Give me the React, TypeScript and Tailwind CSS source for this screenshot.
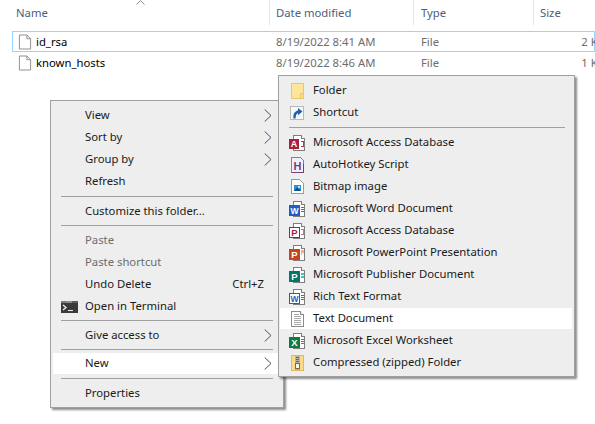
import React from "react";

const font = "font-['Noto_Sans','Open_Sans',sans-serif]";

function Doc({ stroke = "#7f7f7f" }: { stroke?: string }) {
  return (
    <g shapeRendering="crispEdges">
      <path d="M4.5 .5H12.5L15.5 3.5V15.5H4.5Z" fill="#fff" stroke={stroke} />
      <path d="M12.5 .5V3.5H15.5" fill="#e8e8e8" stroke={stroke} />
    </g>
  );
}

function SmallPage() {
  return (
    <g fill="none">
      <path d="M1.5 .5H9.5L13.5 4.5V15.5H1.5Z" fill="#fff" stroke="#8a8a8a" />
      <path d="M9.5 .5V4.5H13.5" stroke="#8a8a8a" />
    </g>
  );
}

function OfficeIcon({ color, letter, right, outline = false }: { color: string; letter: string; right: React.ReactNode; outline?: boolean }) {
  return (
    <svg width="17" height="16" viewBox="0 0 17 16" className="shrink-0">
      <Doc />
      <g shapeRendering="crispEdges">{right}</g>
      <rect x={outline ? 0.5 : 0} y={outline ? 4.5 : 4} width={outline ? 10 : 11} height={outline ? 10 : 11} fill={outline ? "#fff" : color} stroke={outline ? color : "none"} shapeRendering="crispEdges" />
      <text x="5.5" y="12.8" textAnchor="middle" fontSize={letter === "W" ? 8.5 : 9.5} fontWeight="700" fontFamily="Liberation Sans" fill={outline ? color : "#fff"}>{letter}</text>
    </svg>
  );
}

const bars = (c: string) => <path d="M12 6.5H15M12 8.5H15M12 10.5H15" stroke={c} fill="none" />;

const icons: Record<string, React.ReactNode> = {
  folder: (
    <svg width="17" height="16" viewBox="0 0 17 16" className="shrink-0" shapeRendering="crispEdges">
      <path d="M2.5 .5H14.5V15.5H2.5Z" fill="#fde59a" stroke="#eac768" />
      <path d="M11.5 10.5H14.5V15.5H11.5Z" fill="#fcdc85" stroke="#eac768" />
    </svg>
  ),
  shortcut: (
    <svg width="17" height="16" viewBox="0 0 17 16" className="shrink-0">
      <rect x="1.5" y="1.5" width="13" height="13" fill="#f8f8f8" stroke="#b8b8b8" shapeRendering="crispEdges" />
      <path d="M4.5 13.5C3.8 9 5.8 6 9 5.4V3L13.5 6.6L9 10.2V8.2C7.4 8.6 6.6 10.8 6.6 13.5Z" fill="#1e62a8" />
    </svg>
  ),
  accessA: (
    <svg width="17" height="16" viewBox="0 0 17 16" className="shrink-0">
      <Doc />
      <path d="M11.5 6.5H14.5V11.5H11.5" fill="none" stroke="#b43a5a" shapeRendering="crispEdges" />
      <rect x="0" y="4" width="10" height="10" fill="#a81f3c" shapeRendering="crispEdges" />
      <text x="5" y="12.2" textAnchor="middle" fontSize="9" fontWeight="700" fontFamily="Liberation Sans" fill="#fff">A</text>
    </svg>
  ),
  ahk: (
    <svg width="17" height="16" viewBox="0 0 17 16" className="shrink-0">
      <g shapeRendering="crispEdges">
        <path d="M2.5 .5H11.5L14.5 3.5V15.5H2.5Z" fill="#eef0fa" stroke="#6f7fc8" />
        <path d="M2.5 15.5H14.5V7" fill="none" stroke="#7a3f78" />
      </g>
      <text x="8.5" y="12.6" textAnchor="middle" fontSize="11" fontWeight="700" fontFamily="Liberation Sans" fill="#7d3b78">H</text>
    </svg>
  ),
  bitmap: (
    <svg width="17" height="16" viewBox="0 0 17 16" className="shrink-0">
      <g shapeRendering="crispEdges">
        <path d="M2.5 .5H10.5L14.5 4.5V14.5H2.5Z" fill="#fff" stroke="#9a9a9a" />
        <rect x="5" y="6" width="7" height="6" fill="#2f8fd8" />
        <rect x="9" y="7" width="2" height="2" fill="#bfe2f7" />
      </g>
      <path d="M5 12L8 8.5L12 12Z" fill="#10507f" />
    </svg>
  ),
  word: <OfficeIcon color="#1f5fbf" letter="W" right={bars("#2b7cd3")} />,
  access: <OfficeIcon color="#a81f3c" letter="P" right={<path d="M12 6.5H14.5V11.5H12" stroke="#d0708c" fill="none" />} outline />,
  ppt: (
    <OfficeIcon color="#c8431f" letter="P" right={<path d="M12 5H15V8H13V10H12Z" fill="#f4b183" />} />
  ),
  pub: <OfficeIcon color="#077568" letter="P" right={<path d="M12 6H15V8H12ZM12 9H15V11H12Z" fill="#37c6d0" />} />,
  rtf: <OfficeIcon color="#1f5fbf" letter="W" right={bars("#2b7cd3")} outline />,
  txt: (
    <svg width="17" height="16" viewBox="0 0 17 16" className="shrink-0" shapeRendering="crispEdges">
      <path d="M2.5 .5H11.5L14.5 3.5V15.5H2.5Z" fill="#fff" stroke="#8a8a8a" />
      <path d="M11.5 .5V3.5H14.5" fill="#e8e8e8" stroke="#8a8a8a" />
      <path d="M5 3.5H10M5 5.5H12M5 7.5H12M5 9.5H12M5 11.5H12M5 13.5H12" stroke="#a8a8a8" />
    </svg>
  ),
  excel: <OfficeIcon color="#107c41" letter="X" right={bars("#21a366")} />,
  zip: (
    <svg width="17" height="16" viewBox="0 0 17 16" className="shrink-0" shapeRendering="crispEdges">
      <path d="M2.5 .5H14.5V15.5H2.5Z" fill="#fcdc85" stroke="#e0bb5c" />
      <rect x="6" y="1" width="5" height="14" fill="#b5b0a2" />
      <path d="M7 2.5H10M7 4.5H10M7 6.5H10" stroke="#6f6a5a" />
      <rect x="6.5" y="8.5" width="4" height="5" fill="#f5f5f5" stroke="#6f6a5a" />
    </svg>
  ),
  terminal: (
    <svg width="17" height="12" viewBox="0 0 17 12" className="shrink-0" shapeRendering="crispEdges">
      <rect width="17" height="12" fill="#3a3a3a" />
      <rect width="5" height="2" fill="#7a7a7a" />
      <rect x="5" width="6" height="2" fill="#8e8e8e" />
      <rect x="11" width="6" height="2" fill="#5c5c5c" />
      <path d="M2 4L5 6.5L2 9" stroke="#f0f0f0" fill="none" strokeWidth="1.3" shapeRendering="auto" />
      <path d="M7 9.5H12" stroke="#f0f0f0" />
    </svg>
  ),
};

function Arrow() {
  return (
    <svg width="8" height="13" viewBox="0 0 8 13" className="shrink-0">
      <path d="M.7 .5L7 6.5L.7 12.5" fill="none" stroke="#3f5068" strokeWidth="1" />
    </svg>
  );
}

function Sep({ className }: { className: string }) {
  return (
    <div className={`flex items-center ${className}`}>
      <div className="h-px w-full bg-[#a0a0a0]" />
    </div>
  );
}

type Item = { label?: string; arrow?: boolean; icon?: string; hint?: string; disabled?: boolean; active?: boolean; sep?: string; raise?: boolean };

const mainItems: Item[] = [
  { label: "View", arrow: true },
  { label: "Sort by", arrow: true },
  { label: "Group by", arrow: true },
  { label: "Refresh" },
  { sep: "h-[8px]" },
  { label: "Customize this folder..." },
  { sep: "h-[7px]" },
  { label: "Paste", disabled: true },
  { label: "Paste shortcut", disabled: true },
  { label: "Undo Delete", hint: "Ctrl+Z" },
  { label: "Open in Terminal", icon: "terminal" },
  { sep: "h-[7px]" },
  { label: "Give access to", arrow: true },
  { sep: "h-[7px]" },
  { label: "New", arrow: true, active: true, raise: true },
  { sep: "h-[7px]" },
  { label: "Properties" },
];

const newItems: Item[] = [
  { label: "Folder", icon: "folder" },
  { label: "Shortcut", icon: "shortcut" },
  { sep: "h-[8px]" },
  { label: "Microsoft Access Database", icon: "accessA" },
  { label: "AutoHotkey Script", icon: "ahk" },
  { label: "Bitmap image", icon: "bitmap" },
  { label: "Microsoft Word Document", icon: "word" },
  { label: "Microsoft Access Database", icon: "access" },
  { label: "Microsoft PowerPoint Presentation", icon: "ppt" },
  { label: "Microsoft Publisher Document", icon: "pub" },
  { label: "Rich Text Format", icon: "rtf" },
  { label: "Text Document", icon: "txt", active: true },
  { label: "Microsoft Excel Worksheet", icon: "excel" },
  { label: "Compressed (zipped) Folder", icon: "zip" },
];

function Menu({ items, className, labelPad, sepClass }: { items: Item[]; className: string; labelPad: string; sepClass: string }) {
  return (
    <div className={`absolute flex flex-col border border-[#a0a0a0] bg-[#eeeeee] py-[3px] pr-[2px] text-[11.3px] shadow-[2px_2px_2px_rgba(0,0,0,0.45)] ${className}`}>
      {items.map((it, i) =>
        it.sep ? (
          <Sep key={i} className={`${it.sep} ${sepClass}`} />
        ) : (
          <div key={i} className={`flex h-[21px] items-center ${it.raise ? "mb-[1px]" : "mt-[1px]"} ${it.active ? "bg-white" : ""} ${it.disabled ? "text-[#6d6d6d]" : "text-[#1a1a1a]"}`}>
            <div className={`flex shrink-0 items-center ${labelPad}`}>{it.icon ? icons[it.icon] : null}</div>
            <span className="flex-1 whitespace-nowrap">{it.label}</span>
            {it.hint && <span className="mr-[17px] whitespace-nowrap">{it.hint}</span>}
            {it.arrow && <div className="mr-[9px] flex items-center"><Arrow /></div>}
          </div>
        )
      )}
    </div>
  );
}

function FileRow({ name, date, size, selected }: { name: string; date: string; size: string; selected?: boolean }) {
  return (
    <div className={`ml-[12px] flex h-[21px] items-center border pt-[1px] text-[11.3px] ${selected ? "border-[#99d1ff]" : "border-transparent"}`}>
      <div className="flex w-[262px] shrink-0 items-center gap-[4px] pl-[5px] text-black">
        <svg width="14" height="16" viewBox="0 0 15 16" className="shrink-0"><SmallPage /></svg>
        <span>{name}</span>
      </div>
      <span className="w-[144px] shrink-0 pl-[1px] text-[#6d6d6d]">{date}</span>
      <span className="w-[120px] shrink-0 pl-[2px] text-[#6d6d6d]">File</span>
      <span className="w-[70px] shrink-0 pr-[4px] text-right text-[#6d6d6d]">{size}</span>
    </div>
  );
}

export default function App() {
  return (
    <div className={`relative h-[424px] w-[595px] overflow-hidden bg-white ${font}`}>
      <div className="flex h-[25px] items-center text-[11.3px] text-[#4c607a]">
        <div className="relative h-full w-[270px] border-r border-[#e5e5e5] pl-[16px] pt-[5px]">
          Name
          <svg width="9" height="5" viewBox="0 0 9 5" className="absolute left-[136px] top-0">
            <path d="M.5 4.5L4.5 .5L8.5 4.5" fill="none" stroke="#8a8a8a" />
          </svg>
        </div>
        <div className="h-full w-[144px] border-r border-[#e5e5e5] pl-[6px] pt-[5px]">Date modified</div>
        <div className="h-full w-[120px] border-r border-[#e5e5e5] pl-[7px] pt-[5px]">Type</div>
        <div className="h-full flex-1 pl-[6px] pt-[5px]">Size</div>
      </div>
      <div className="mt-[6px] flex flex-col">
        <FileRow name="id_rsa" date="8/19/2022 8:41 AM" size="2 KB" selected />
        <FileRow name="known_hosts" date="8/19/2022 8:46 AM" size="1 KB" />
      </div>
      <Menu items={mainItems} className="left-[50px] top-[100px] w-[234px] pl-[2px]" labelPad="w-[32px] pl-[8px]" sepClass="ml-[8px] mr-[8px]" />
      <Menu items={newItems} className="left-[278px] top-[75px] w-[297px] pl-[1px]" labelPad="w-[33px] pl-[9px]" sepClass="ml-[9px] mr-[7px]" />
    </div>
  );
}
